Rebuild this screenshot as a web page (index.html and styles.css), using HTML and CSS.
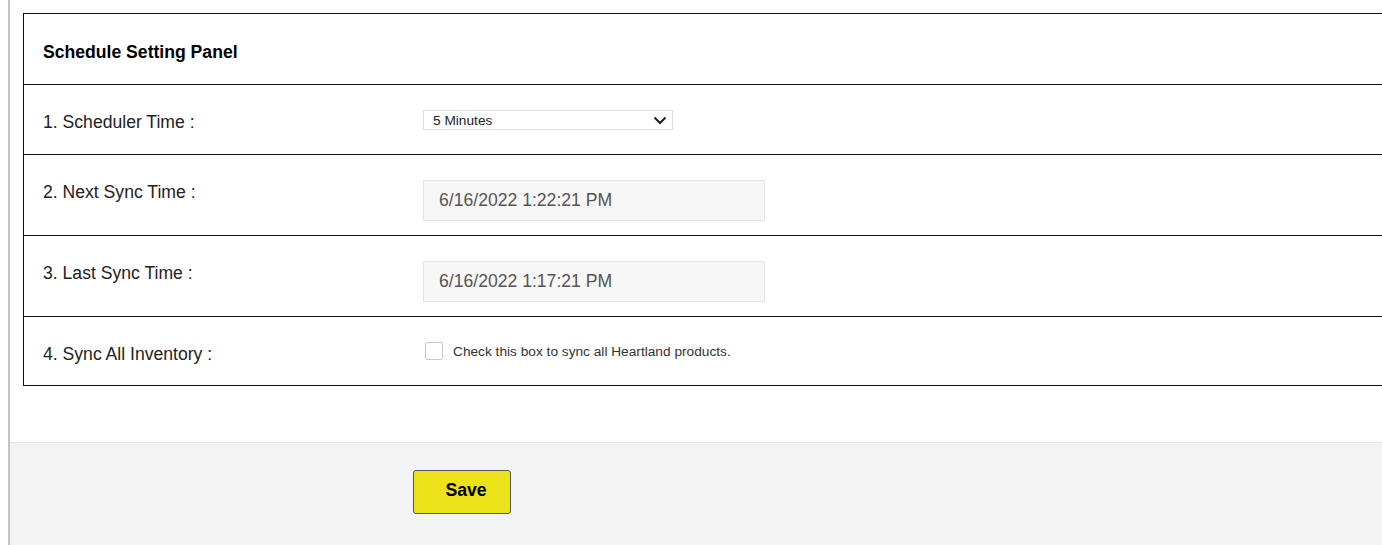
FILE: index.html
```html
<!DOCTYPE html>
<html lang="en">
<head>
    <meta charset="UTF-8">
    <meta name="viewport" content="width=device-width, initial-scale=1.0">
    <title>Schedule Setting Panel</title>
    <link rel="stylesheet" href="styles.css">
</head>
<body>

    <div class="page">
        <div class="content">
            <!-- Settings table -->
            <div class="panel">
                <div class="panel-head">Schedule Setting Panel</div>

                <div class="row row-short">
                    <div class="label">1. Scheduler Time :</div>
                    <div class="field">
                        <div class="select">
                            <span>5 Minutes</span>
                            <svg width="14" height="9" viewBox="0 0 14 9">
                                <path d="M1.5 1.5 L7 7 L12.5 1.5" fill="none" stroke="#222" stroke-width="2.2"/>
                            </svg>
                        </div>
                    </div>
                </div>

                <div class="row">
                    <div class="label">2. Next Sync Time :</div>
                    <div class="field">
                        <div class="time-box">6/16/2022 1:22:21 PM</div>
                    </div>
                </div>

                <div class="row">
                    <div class="label">3. Last Sync Time :</div>
                    <div class="field">
                        <div class="time-box">6/16/2022 1:17:21 PM</div>
                    </div>
                </div>

                <div class="row row-last">
                    <div class="label">4. Sync All Inventory :</div>
                    <div class="field">
                        <label class="check">
                            <span class="check-box"></span>
                            Check this box to sync all Heartland products.
                        </label>
                    </div>
                </div>
            </div>
        </div>

        <!-- Save bar -->
        <div class="footer">
            <button class="save-btn">Save</button>
        </div>
    </div>

</body>
</html>
```

FILE: styles.css
```css
/* General Styling */
body {
    margin: 0;
    padding: 0;
    font-family: "Liberation Sans", Arial, sans-serif;
    background: #fff;
    overflow: hidden;
}
.page {
    margin-left: 8px;
    border-left: 2px solid #c4c4c4;
    height: 545px;
    overflow: hidden;
}
.content {
    padding: 13px 0 56px 13px;
}
/* Settings table */
.panel {
    width: 1500px;
    border: 1px solid #111;
}
.panel-head {
    height: 42px;
    padding: 28px 0 0 19px;
    font-size: 17.6px;
    font-weight: bold;
    color: #000;
    border-bottom: 1px solid #111;
}
.row {
    display: flex;
    height: 55px;
    padding-top: 25px;
    border-bottom: 1px solid #111;
}
.row-short {
    height: 44px;
}
.row-last {
    height: 43px;
    border-bottom: none;
}
.label {
    width: 380px;
    padding-left: 19px;
    font-size: 17.6px;
    line-height: 20px;
    color: #222;
    margin-top: 2px;
}
.field {
    flex: 1;
}
/* Dropdown */
.select {
    width: 234px;
    height: 18px;
    padding: 0 5px 0 9px;
    border: 1px solid #ddd;
    display: flex;
    align-items: center;
    justify-content: space-between;
    font-size: 13.7px;
    color: #222;
}
.select svg {
    margin-top: 1px;
}
/* Read-only time fields */
.time-box {
    width: 325px;
    height: 39px;
    padding-left: 15px;
    line-height: 39px;
    background: #f7f7f7;
    border: 1px solid #e3e3e3;
    font-size: 17.6px;
    color: #555;
}
/* Checkbox */
.check {
    display: flex;
    align-items: center;
    padding-left: 2px;
    font-size: 13.7px;
    color: #333;
}
.check-box {
    width: 16px;
    height: 16px;
    border: 1px solid #c8c8c8;
    border-radius: 2px;
    margin-right: 10px;
    background: #fff;
}
/* Footer */
.footer {
    background: #f3f3f3;
    border-top: 1px solid #e6e6e6;
    height: 120px;
    padding: 27px 0 0 403px;
}
.save-btn {
    width: 98px;
    height: 44px;
    padding: 0 0 4px 8px;
    background: #ebe21a;
    border: 1px solid #555;
    border-radius: 3px;
    font-family: "Liberation Sans", Arial, sans-serif;
    font-size: 17.6px;
    font-weight: bold;
    color: #000;
    cursor: pointer;
}
.save-btn:hover {
    background: #d8cf10;
}
```
